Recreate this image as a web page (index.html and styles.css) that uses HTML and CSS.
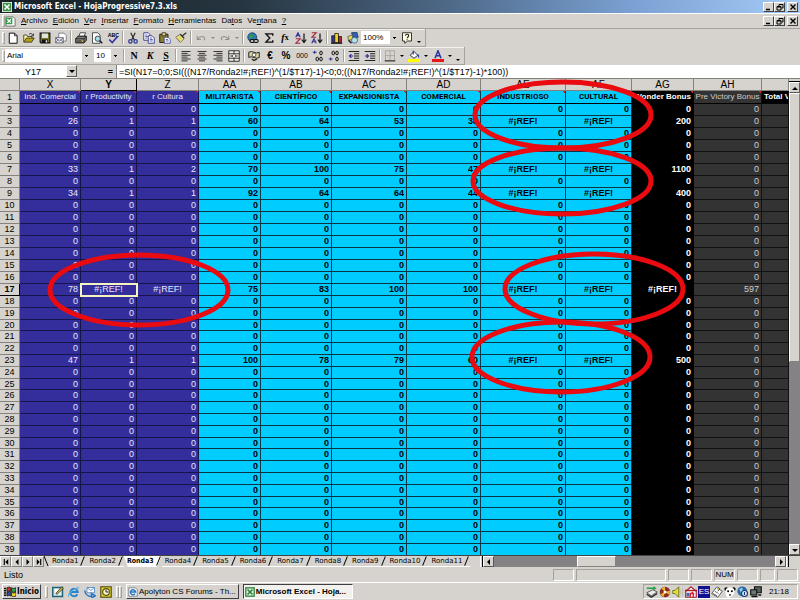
FILE: index.html
```html
<!DOCTYPE html>
<html lang="es">
<head>
<meta charset="utf-8">
<title>Microsoft Excel - HojaProgressive7.3.xls</title>
<link rel="stylesheet" href="styles.css">
</head>
<body>
<header class="titlebar">
  <svg class="app-icon" viewBox="0 0 12 12"><rect width="12" height="12" fill="#e9f3e6"/><rect x="1" y="1" width="10" height="10" fill="#3b9145"/><path d="M3 3l6 6M9 3l-6 6" stroke="#fff" stroke-width="2"/></svg>
  <h1>Microsoft Excel - HojaProgressive7.3.xls</h1>
  <div class="winbuttons">
    <button aria-label="Minimizar"><svg viewBox="0 0 8 8"><path d="M1 6.5h4" stroke="#000" stroke-width="1.5"/></svg></button>
    <button aria-label="Restaurar"><svg viewBox="0 0 8 8"><path d="M3 3V1.5h4V5H5.500M1 3.500h4V7H1zM1 4h4M3 1.500h4" fill="none" stroke="#000"/></svg></button>
    <button class="close" aria-label="Cerrar"><svg viewBox="0 0 8 8"><path d="M1.500 1.500l5 5M6.500 1.500l-5 5" stroke="#000" stroke-width="1.400"/></svg></button>
  </div>
</header>
<nav class="menubar">
  <span class="grip"></span>
  <svg class="doc-icon" viewBox="0 0 12 12"><path d="M1 1h8l2 2v8H1z" fill="#fff" stroke="#666"/><rect x="1" y="2" width="7" height="7" fill="#2f9a46"/><path d="M2.500 3.500l4 4M6.500 3.500l-4 4" stroke="#fff" stroke-width="1.500"/></svg>
  <button><u>A</u>rchivo</button><button><u>E</u>dición</button><button><u>V</u>er</button><button><u>I</u>nsertar</button><button><u>F</u>ormato</button><button><u>H</u>erramientas</button><button>Da<u>t</u>os</button><button>Ve<u>n</u>tana</button><button><u>?</u></button>
  <div class="winbuttons">
    <button aria-label="Minimizar libro"><svg viewBox="0 0 8 8"><path d="M1 6.500h4" stroke="#000" stroke-width="1.500"/></svg></button>
    <button aria-label="Restaurar libro"><svg viewBox="0 0 8 8"><path d="M3 3V1.500h4V5H5.500M1 3.500h4V7H1zM1 4h4M3 1.500h4" fill="none" stroke="#000"/></svg></button>
    <button class="close" aria-label="Cerrar libro"><svg viewBox="0 0 8 8"><path d="M1.500 1.500l5 5M6.500 1.500l-5 5" stroke="#000" stroke-width="1.400"/></svg></button>
  </div>
</nav>

<div class="toolbar">
  <span class="grip"></span>
  <button class="tool" aria-label="Nuevo"><svg viewBox="0 0 16 16"><path d="M3 1.500h7l3.500 3.500v10H3z" fill="#fff" stroke="#111" stroke-width="1.300"/><path d="M10 1.500V5h3.500" fill="none" stroke="#111"/></svg></button>
  <button class="tool" aria-label="Abrir"><svg viewBox="0 0 16 16"><path d="M1 13V4h4l1 2h6v2" fill="#fff5a0" stroke="#222"/><path d="M1 13.500L4.500 8H15l-3.500 5.500z" fill="#b9a114" stroke="#222"/><path d="M8 3q3-3 5 1M14 2v3h-3" fill="none" stroke="#111"/></svg></button>
  <button class="tool" aria-label="Guardar"><svg viewBox="0 0 16 16"><path d="M1.500 1.500h13v13h-12l-1-1z" fill="#77762a" stroke="#111" stroke-width="1.500"/><rect x="4" y="2" width="8" height="6" fill="#e2e2da"/><rect x="4" y="10" width="8" height="4.500" fill="#111"/><rect x="9" y="11" width="2" height="3" fill="#eee"/></svg></button>
  <button class="tool" aria-label="Correo"><svg viewBox="0 0 16 16"><path d="M5 1.500h7l3 3V12H5z" fill="#fff" stroke="#667"/><path d="M1 7.500h10v7H1z" fill="#f4f4fa" stroke="#445"/><path d="M1 8l5 4 5-4M1 14l4-4M11 14l-4-4" fill="none" stroke="#445"/></svg></button>
  <span class="sep"></span>
  <button class="tool" aria-label="Imprimir"><svg viewBox="0 0 16 16"><path d="M5 6l2-5h7l-2 5z" fill="#fff" stroke="#222"/><path d="M1 9l3-3.500h11V11l-3 3.500H1z" fill="#85837d" stroke="#111" stroke-width="1.300"/><path d="M1 9h11l3-3M12 9v5M3 12h6" fill="none" stroke="#111"/><path d="M9 12h2" stroke="#e4c912" stroke-width="1.500"/></svg></button>
  <button class="tool" aria-label="Vista preliminar"><svg viewBox="0 0 16 16"><path d="M2 1h7l3 3v11H2z" fill="#fff" stroke="#222"/><circle cx="9" cy="9" r="3.500" fill="#a8dce8" stroke="#222"/><path d="M11.500 11.500l3.500 3.500" stroke="#222" stroke-width="2"/></svg></button>
  <button class="tool" aria-label="Ortografía"><svg viewBox="0 0 16 16"><text x="1" y="6" font-size="7" font-weight="bold" font-family="Liberation Sans, sans-serif">ABC</text><path d="M3 10l4 4 7-8" fill="none" stroke="#3535a5" stroke-width="2.300"/></svg></button>
  <span class="sep"></span>
  <button class="tool" aria-label="Cortar"><svg viewBox="0 0 16 16"><path d="M5 1l5 10M11 1L6 11" stroke="#222" stroke-width="1.500"/><g fill="none" stroke="#2d3993" stroke-width="1.700"><circle cx="4.500" cy="12.500" r="2.200"/><circle cx="11.500" cy="12.500" r="2.200"/></g></svg></button>
  <button class="tool" aria-label="Copiar"><svg viewBox="0 0 16 16"><g fill="#fff" stroke="#32398e" stroke-width="1.200"><path d="M1 1h6l2 2v8H1z"/><path d="M7 5h5l3 3v7H7z"/></g><path d="M3 4h3M3 6h4M3 8h3M9 8h3M9 10h4M9 12h4" stroke="#32398e"/></svg></button>
  <button class="tool" aria-label="Pegar"><svg viewBox="0 0 16 16"><path d="M1 3h11v11H1z" fill="#8a802a" stroke="#222" stroke-width="1.300"/><path d="M4 1h5v4H4z" fill="#ddd17c" stroke="#222"/><path d="M7 7h5l3 3v5H7z" fill="#fff" stroke="#32398e"/><path d="M9 10h3M9 12h4" stroke="#32398e"/></svg></button>
  <button class="tool" aria-label="Copiar formato"><svg viewBox="0 0 16 16"><path d="M1 7l6-4 5 6-5 5z" fill="#f3e982" stroke="#555"/><path d="M7 3l5 5M10 5l5-4" stroke="#333" stroke-width="1.800"/><path d="M3 8l4 4M5 6l4 4" stroke="#b4a530"/></svg></button>
  <span class="sep"></span>
  <button class="tool" aria-label="Deshacer"><svg viewBox="0 0 16 16"><path d="M3 5v5h5M3 10q5-6 9-3 2 2 0 4" fill="none" stroke="#929089" stroke-width="1.400"/></svg></button><button class="drop dim" aria-label="Lista deshacer"></button>
  <button class="tool" aria-label="Rehacer"><svg viewBox="0 0 16 16"><path d="M13 5v5H8M13 10Q8 4 4 7q-2 2 0 4" fill="none" stroke="#929089" stroke-width="1.400"/></svg></button><button class="drop dim" aria-label="Lista rehacer"></button>
  <span class="sep"></span>
  <button class="tool" aria-label="Hipervínculo"><svg viewBox="0 0 16 16"><circle cx="7" cy="7" r="6" fill="#287dab" stroke="#16346a"/><path d="M4 3l4 1-1 4-4 1z" fill="#319c55"/><rect x="4" y="10" width="6" height="4" rx="2" fill="#bbb" stroke="#111" stroke-width="1.500"/><rect x="9" y="10" width="6" height="4" rx="2" fill="#bbb" stroke="#111" stroke-width="1.500"/></svg></button>
  <button class="tool" aria-label="Autosuma"><svg viewBox="0 0 16 16"><path d="M13 5V2.500H4L9 8l-5 5.500h9V11" fill="none" stroke="#111" stroke-width="1.900"/></svg></button>
  <button class="tool fx" aria-label="Función"><i>f</i><small>x</small></button>
  <button class="tool" aria-label="Orden ascendente"><svg viewBox="0 0 16 16"><path d="M1 7l3-6 3 6M2 5h4" fill="none" stroke="#31319b" stroke-width="1.500"/><path d="M1 9h6l-6 6h6" fill="none" stroke="#a5263d" stroke-width="1.500"/><path d="M12 2v11M9 10l3 4 3-4" fill="none" stroke="#111" stroke-width="1.600"/></svg></button>
  <button class="tool" aria-label="Orden descendente"><svg viewBox="0 0 16 16"><path d="M1 15l3-6 3 6M2 13h4" fill="none" stroke="#31319b" stroke-width="1.500"/><path d="M1 1h6L1 7h6" fill="none" stroke="#a5263d" stroke-width="1.500"/><path d="M12 2v11M9 10l3 4 3-4" fill="none" stroke="#111" stroke-width="1.600"/></svg></button>
  <span class="sep"></span>
  <button class="tool" aria-label="Gráfico"><svg viewBox="0 0 16 16"><g stroke="#111"><path d="M1 5h4v9H1z" fill="#2e369f"/><path d="M5 2h5v12H5z" fill="#e8d422"/><path d="M10 6h4v8h-4z" fill="#b92233"/></g><path d="M0 15h15" stroke="#111" stroke-width="1.500"/></svg></button>
  <button class="tool" aria-label="Dibujo"><svg viewBox="0 0 16 16"><path d="M6 1l7-1 2 7-6 3z" fill="#2f62b5" stroke="#234"/><path d="M1 6l6-2 1 6-6 1z" fill="#e5d748" stroke="#555"/><circle cx="10" cy="11" r="4" fill="#b9e0dd" stroke="#26508e"/><path d="M2 11l4 4" stroke="#222" stroke-width="2"/></svg></button>
  <select class="combo zoom" aria-label="Zoom"><option>100%</option></select>
  <button class="tool help" aria-label="Ayuda"><svg viewBox="0 0 16 16"><path d="M2 1h12v11H9l-4 3v-3H2z" fill="#ffffe0" stroke="#222" stroke-width="1.200"/><path d="M6 5q0-2 2-2 3 0 2 3L8 8M8 9.500v1.500" fill="none" stroke="#222" stroke-width="1.500"/></svg></button>
  <button class="drop low" aria-label="Más botones"></button>
</div>

<div class="toolbar format">
  <span class="grip"></span>
  <select class="combo font" aria-label="Fuente"><option>Arial</option></select>
  <select class="combo size" aria-label="Tamaño"><option>10</option></select>
  <span class="sep"></span>
  <button class="tool letter"><b>N</b></button>
  <button class="tool letter"><b><i>K</i></b></button>
  <button class="tool letter"><b><u>S</u></b></button>
  <span class="sep"></span>
  <button class="tool" aria-label="Alinear a la izquierda"><svg viewBox="0 0 16 16"><path d="M2 2h12M2 4.500h8M2 7h12M2 9.500h8M2 12h12M2 14.500h8" stroke="#333" stroke-width="1.300"/></svg></button>
  <button class="tool" aria-label="Centrar"><svg viewBox="0 0 16 16"><path d="M2 2h12M4 4.500h8M2 7h12M4 9.500h8M2 12h12M4 14.500h8" stroke="#333" stroke-width="1.300"/></svg></button>
  <button class="tool" aria-label="Alinear a la derecha"><svg viewBox="0 0 16 16"><path d="M2 2h12M6 4.500h8M2 7h12M6 9.500h8M2 12h12M6 14.500h8" stroke="#333" stroke-width="1.300"/></svg></button>
  <button class="tool" aria-label="Combinar y centrar"><svg viewBox="0 0 16 16"><path d="M1 1h14v14H1zM1 5h14M1 11h14M8 1v4M8 11v4M3 8h3M13 8h-3" fill="#f3f1ed" stroke="#222" stroke-width="1.200"/><path d="M7 6l-2 2 2 2M9 6l2 2-2 2" fill="none" stroke="#222"/></svg></button>
  <span class="sep"></span>
  <button class="tool" aria-label="Moneda"><svg viewBox="0 0 16 16"><path d="M1 3q4-2 7 0t7 0v7q-3 2-7 0t-7 0z" fill="#d9d39b" stroke="#222" stroke-width="1.300"/><circle cx="8" cy="6.500" r="2.500" fill="#fff" stroke="#333"/><path d="M5 12l3 2 4-2" fill="#c5b53a" stroke="#222" stroke-width="1.500"/></svg></button>
  <button class="tool letter sans"><b>€</b></button>
  <button class="tool letter sans"><b>%</b></button>
  <button class="tool zeros">000</button>
  <button class="tool" aria-label="Aumentar decimales"><svg viewBox="0 0 16 16"><path d="M1 3h5M3.500 1v4" stroke="#31319b" stroke-width="1.500"/><g fill="none" stroke="#111" stroke-width="1.300"><ellipse cx="12" cy="4" rx="1.700" ry="2.500"/><ellipse cx="7" cy="12" rx="1.700" ry="2.500"/><ellipse cx="12" cy="12" rx="1.700" ry="2.500"/></g></svg></button>
  <button class="tool" aria-label="Disminuir decimales"><svg viewBox="0 0 16 16"><path d="M1 12h5M3.500 10v4" stroke="#31319b" stroke-width="1.500"/><g fill="none" stroke="#111" stroke-width="1.300"><ellipse cx="7" cy="4" rx="1.700" ry="2.500"/><ellipse cx="12" cy="4" rx="1.700" ry="2.500"/><ellipse cx="12" cy="12" rx="1.700" ry="2.500"/></g></svg></button>
  <span class="sep"></span>
  <button class="tool" aria-label="Disminuir sangría"><svg viewBox="0 0 16 16"><path d="M1 2h14M8 5h7M8 8h7M8 11h7M1 14h14" stroke="#222" stroke-width="1.400"/><path d="M7 8H2M4.500 5.500L2 8l2.500 2.500" fill="none" stroke="#31319b" stroke-width="1.600"/></svg></button>
  <button class="tool" aria-label="Aumentar sangría"><svg viewBox="0 0 16 16"><path d="M1 2h14M8 5h7M8 8h7M8 11h7M1 14h14" stroke="#222" stroke-width="1.400"/><path d="M1 8h5M3.500 5.500L6 8l-2.500 2.500" fill="none" stroke="#31319b" stroke-width="1.600"/></svg></button>
  <span class="sep"></span>
  <button class="tool" aria-label="Bordes"><svg viewBox="0 0 16 16"><path d="M2 1v13M8 1v13M14 1v13M2 1h12M2 7.500h12" stroke="#9d9a93"/><path d="M1 14.500h14" stroke="#222" stroke-width="1.500"/></svg></button><button class="drop" aria-label="Tipos de borde"></button>
  <button class="tool" aria-label="Color de relleno"><svg viewBox="0 0 16 16"><path d="M3 7l5-5 5 5-5 4z" fill="#fff" stroke="#222" stroke-width="1.200"/><path d="M7 6V1M13 6q2 2 1 4" fill="none" stroke="#27389b" stroke-width="1.600"/><path d="M0 14h16" stroke="#ff0" stroke-width="4"/></svg></button><button class="drop" aria-label="Colores de relleno"></button>
  <button class="tool" aria-label="Color de fuente"><svg viewBox="0 0 16 16"><path d="M4 11l4-10 4 10M5.500 7.500h5" fill="none" stroke="#29319c" stroke-width="2"/><path d="M0 14h16" stroke="#e8151b" stroke-width="4"/></svg></button><button class="drop" aria-label="Colores de fuente"></button>
  <button class="drop low" aria-label="Más formato"></button>
</div>

<div class="formulabar">
  <input class="namebox" aria-label="Cuadro de nombres" value="Y17">
  <button class="sbtn" aria-label="Abrir nombres"><svg viewBox="0 0 8 8"><path d="M1 3h6L4 6z"/></svg></button>
  <button class="equals">=</button>
  <input class="formula" aria-label="Fórmula" value="=SI(N17=0;0;SI(((N17/Ronda2!#¡REF!)^(1/$T17)-1)&lt;0;0;((N17/Ronda2!#¡REF!)^(1/$T17)-1)*100))">
</div>

<main class="workbook">
  <div class="sheet">
    <table>
      <colgroup><col class="c-row"><col class="c-x"><col class="c-y"><col class="c-z"><col class="c-aa"><col class="c-ab"><col class="c-ac"><col class="c-ad"><col class="c-ae"><col class="c-af"><col class="c-ag"><col class="c-ah"><col></colgroup>
      <thead><tr><th></th><th>X</th><th class="on">Y</th><th>Z</th><th>AA</th><th>AB</th><th>AC</th><th>AD</th><th>AE</th><th>AF</th><th>AG</th><th>AH</th><th></th></tr></thead>
      <tbody id="cells"></tbody>
    </table>
    <svg class="marks" viewBox="0 0 788 476" aria-hidden="true">
      <ellipse cx="563" cy="36" rx="88" ry="33"/>
      <ellipse cx="562" cy="102" rx="89" ry="33"/>
      <ellipse cx="594" cy="210" rx="89" ry="35"/>
      <ellipse cx="561" cy="278" rx="89" ry="35"/>
      <ellipse cx="139" cy="211" rx="89" ry="35"/>
    </svg>
  </div>
  <div class="vscroll">
    <span class="split"></span>
    <button class="sbtn" aria-label="Arriba"><svg viewBox="0 0 8 8"><path d="M1 6h6L4 3z"/></svg></button>
    <span class="vthumb"></span><span class="track"></span>
    <button class="sbtn" aria-label="Abajo"><svg viewBox="0 0 8 8"><path d="M1 3h6L4 6z"/></svg></button>
  </div>
</main>

<div class="tabrow">
  <div class="tabs">
    <button class="nav" aria-label="Primera"><svg viewBox="0 0 8 8"><path d="M1 0h1.500v8H1zM7 0v8L3 4z"/></svg></button>
    <button class="nav" aria-label="Anterior"><svg viewBox="0 0 8 8"><path d="M6 0v8L2 4z"/></svg></button>
    <button class="nav" aria-label="Siguiente"><svg viewBox="0 0 8 8"><path d="M2 0v8l4-4z"/></svg></button>
    <button class="nav" aria-label="Última"><svg viewBox="0 0 8 8"><path d="M5.500 0H7v8H5.500zM1 0v8l4-4z"/></svg></button>
    <svg class="edge" viewBox="0 0 5 11"><path d="M0 0l4 10" stroke="#000"/></svg>
    <button class="tab">Ronda1</button><button class="tab">Ronda2</button><button class="tab current">Ronda3</button><button class="tab">Ronda4</button><button class="tab">Ronda5</button><button class="tab">Ronda6</button><button class="tab">Ronda7</button><button class="tab">Ronda8</button><button class="tab">Ronda9</button><button class="tab">Ronda10</button><button class="tab">Ronda11</button>
  </div>
  <div class="hscroll">
    <span class="hsplit"></span>
    <button class="sbtn" aria-label="Izquierda"><svg viewBox="0 0 8 8"><path d="M5 1v6L2 4z"/></svg></button>
    <span class="track lead"></span><span class="hthumb"></span><span class="track"></span>
    <button class="sbtn" aria-label="Derecha"><svg viewBox="0 0 8 8"><path d="M3 1v6l3-3z"/></svg></button>
    <span class="hsplit"></span>
  </div>
</div>

<div class="status">
  <span class="ready">Listo</span>
  <span class="cell w-s"></span><span class="cell w-l"></span><span class="cell w-s"></span><span class="cell w-s"></span><span class="cell w-s">NUM</span><span class="cell w-s"></span><span class="cell w-t"></span><span class="cell w-s"></span>
</div>

<footer class="taskbar">
  <button class="start"><svg viewBox="0 0 16 14"><path d="M0 3h3M0 6h3M0 9h3M0 12h3" stroke="#111" stroke-width="2"/><g stroke="#111"><path d="M4 2q3-2 5 0v5q-2-2-5 0z" fill="#e12b23"/><path d="M10 2q3 2 6 0v5q-3 2-6 0z" fill="#2ca448"/><path d="M4 8q3-2 5 0v5q-2-2-5 0z" fill="#2f4cb8"/><path d="M10 8q3 2 6 0v5q-3 2-6 0z" fill="#ecd426"/></g></svg>Inicio</button>
  <span class="grip"></span>
  <button class="quick" aria-label="Escritorio"><svg viewBox="0 0 16 16"><path d="M1 2h13v12H1z" fill="#d3e6e9" stroke="#236477" stroke-width="2"/><path d="M4 4h7v7H4z" fill="#fff"/><path d="M5 10l8-9 2 2-8 8z" fill="#e0b832" stroke="#222"/></svg></button>
  <button class="quick" aria-label="Internet Explorer"><svg viewBox="0 0 16 16"><path d="M12.500 11A5 5 0 1 1 13 8H4" fill="none" stroke="#2a84cc" stroke-width="2.600"/><path d="M1 14Q-1 9 13 2l2 1" fill="none" stroke="#5db0dc" stroke-width="1.400"/></svg></button>
  <button class="quick" aria-label="Outlook Express"><svg viewBox="0 0 16 16"><path d="M4 2h10v7H4z" fill="#f6fbff" stroke="#3e7ec1"/><path d="M4 2l5 4 5-4" fill="none" stroke="#3e7ec1"/><path d="M1 6q1 8 9 8V10l5 3-5 3" fill="none" stroke="#2875c5" stroke-width="2"/></svg></button>
  <button class="quick" aria-label="Outlook"><svg viewBox="0 0 16 16"><rect x="1" y="1" width="14" height="14" fill="#d9c928" stroke="#575018" stroke-width="1.500"/><circle cx="8" cy="8" r="4.500" fill="#f5f2cf" stroke="#575018" stroke-width="1.500"/><path d="M8 5v3h3" fill="none" stroke="#222" stroke-width="1.300"/></svg></button>
  <span class="grip"></span><span class="grip second"></span>
  <button class="task"><svg viewBox="0 0 12 12"><path d="M1 1h8l2 2v8H1z" fill="#fff" stroke="#777"/><path d="M8.500 8A3 3 0 1 1 9 6H4" fill="none" stroke="#2274c4" stroke-width="1.700"/></svg>Apolyton CS Forums - Th...</button>
  <button class="task active"><svg viewBox="0 0 12 12"><rect x="1" y="1" width="10" height="10" fill="#e6f3e3" stroke="#227c35" stroke-width="1.500"/><path d="M3 3l6 6M9 3l-6 6" stroke="#258539" stroke-width="2"/></svg>Microsoft Excel - Hoja...</button>
  <div class="tray">
    <svg viewBox="0 0 16 16"><path d="M1 9l8-4 6 3-8 5z" fill="#e9eeea" stroke="#333"/><path d="M1 11l6 4 8-5" fill="none" stroke="#222" stroke-width="1.500"/><path d="M1 2h9V0l4 3-4 3V4H1z" fill="#23a148"/></svg>
    <svg viewBox="0 0 16 16"><circle cx="8" cy="8" r="7" fill="#8c2d20"/><path d="M8 8L3 3l5-2zM8 8l7-2-1 6zM8 8l-2 7-4-4z" fill="#e9b62e"/><circle cx="8" cy="8" r="2" fill="#fff"/></svg>
    <svg viewBox="0 0 16 16"><path d="M1 6h3l5-5v14l-5-5H1z" fill="#e7df32" stroke="#555a16"/><path d="M11 5v6M14 3v10" stroke="#bbb6a0"/></svg>
    <svg viewBox="0 0 16 16"><path d="M1 7l7-6 7 6v8H1z" fill="#fff" stroke="#a81c2b" stroke-width="1.500"/><path d="M0 6h16" stroke="#a81c2b" stroke-width="2"/><path d="M7 15v-5h4l-2-2M11 10v5" stroke="#dc2537" stroke-width="2" fill="none"/><path d="M2 9h4v5H2z" fill="#436cb3"/></svg>
    <span class="lang">ES</span>
    <svg viewBox="0 0 16 16"><path d="M1 10l6-8 8 5-6 8z" fill="#fff" stroke="#333"/><path d="M3 10l5 3M5 7l5 3" stroke="#444"/><path d="M9 1l3 3-3 3" fill="#c7be71" stroke="#333"/></svg>
    <svg viewBox="0 0 16 16"><circle cx="3" cy="4" r="2.500"/><circle cx="13" cy="4" r="2.500"/><path d="M2 7q0-5 6-5t6 5-6 8-6-8" fill="#fff"/><circle cx="5.500" cy="7" r="1.300"/><circle cx="10.500" cy="7" r="1.300"/><path d="M7 11h2v2H7z"/></svg>
    <svg viewBox="0 0 16 16"><circle cx="7" cy="7" r="6.500" fill="#2668a9"/><path d="M3 4l4-2 1 4-3 3z" fill="#93cce9"/><circle cx="10" cy="10" r="4" fill="#dcecf6" stroke="#173b73" stroke-width="1.500"/><path d="M10 8v4" stroke="#173b73" stroke-width="1.500"/></svg>
    <svg viewBox="0 0 16 16"><path d="M6 1h9v8H6z" fill="#56605f" stroke="#111" stroke-width="1.500"/><path d="M1 5h8v7H1z" fill="#6c7775" stroke="#111" stroke-width="1.500"/><path d="M2 14h8M11 12h4" stroke="#111" stroke-width="2"/></svg>
    <time>21:18</time>
  </div>
</footer>
<script src="sheet.js"></script>
</body>
</html>
```
FILE: styles.css
```css
* { box-sizing: border-box; }

:root {
  --face: #d6d3ce;
  --shade: #84827d;
  --ui: "Liberation Sans", Arial, sans-serif;
  --wide: "DejaVu Sans Condensed", "DejaVu Sans", sans-serif;
}

body {
  margin: 0;
  height: 100vh;
  display: flex;
  flex-direction: column;
  overflow: hidden;
  background: var(--face);
  font: 8px/10px var(--ui);
  color: #000;
}

button, input, select {
  font: inherit;
  color: inherit;
  margin: 0;
  padding: 0;
  border: 0;
  border-radius: 0;
  background: none;
}

button { display: flex; align-items: center; justify-content: center; white-space: nowrap; }
svg { display: block; flex: none; }

/* Title and menu */
.titlebar {
  flex: none;
  height: 13px;
  display: flex;
  align-items: center;
  gap: 2px;
  padding: 0 2px;
  background: linear-gradient(90deg, #172126, #263540 30%, #4c6684 55%, #789fd0 78%, #a5cbf7);
  color: #fff;
}
.app-icon { width: 10px; height: 10px; }
.titlebar h1 { margin: 0; font: bold 8px/12px var(--wide); }

.winbuttons { margin-left: auto; display: flex; }
.winbuttons button {
  width: 11px;
  height: 10px;
  background: var(--face);
  border: 1px solid;
  border-color: #fff #404040 #404040 #fff;
}
.winbuttons .close { margin-left: 2px; }
.winbuttons svg { width: 8px; height: 8px; }

.menubar {
  flex: none;
  height: 16px;
  display: flex;
  align-items: center;
  gap: 5px;
  padding: 0 2px;
  border-top: 1px solid #fff;
  border-bottom: 1px solid #a5a29c;
}
.menubar > .grip { margin-right: -5px; }
.doc-icon { width: 11px; height: 11px; }

.grip {
  flex: none;
  width: 3px;
  height: 12px;
  border: 1px solid;
  border-color: #fff #a5a29c #a5a29c #fff;
}

/* Toolbars */
.toolbar {
  flex: none;
  align-self: flex-start;
  height: 18px;
  display: flex;
  align-items: center;
  padding: 0 2px;
  border: solid #a5a29c;
  border-width: 0 1px 1px 0;
  box-shadow: inset 0 1px #f4f2ee;
}
.tool { width: 16px; height: 16px; }
.tool svg { width: 12px; height: 12px; }
.sep { flex: none; width: 2px; height: 13px; margin: 0 1px; border-left: 1px solid #a5a29c; border-right: 1px solid #fff; }
.drop { width: 8px; height: 16px; }
.drop::after { content: ""; border: 2px solid transparent; border-top-color: #000; border-bottom: 0; }
.drop.dim::after { border-top-color: #8d8a84; }
.drop.low { align-items: flex-end; padding-bottom: 3px; }
.fx { font: bold 10px/12px "Liberation Serif", serif; }
.fx small { font-size: 8px; }
.letter { font: 10px/12px "Liberation Serif", serif; }
.letter.sans { font-family: var(--ui); }
.zeros { font: 7px/10px var(--ui); }

.combo {
  appearance: none;
  height: 13px;
  padding: 0 10px 0 2px;
  background:
    linear-gradient(#000, #000) right 3px top 6px / 3px 1px no-repeat,
    linear-gradient(#000, #000) right 4px top 7px / 1px 1px no-repeat,
    linear-gradient(90deg, #fff calc(100% - 9px), var(--face) 0);
}
.combo.font { width: 86px; margin-right: 3px; }
.combo.size { width: 26px; margin-right: 2px; }
.combo.zoom { width: 38px; }

/* Formula bar */
.formulabar {
  flex: none;
  height: 13px;
  display: flex;
  background: #fff;
  font-size: 9px;
  line-height: 12px;
}
.formulabar .sbtn { height: 12px; }
.namebox { width: 66px; text-align: center; }
.equals {
  width: 40px;
  justify-content: flex-end;
  padding-right: 3px;
  background: var(--face);
  border-right: 1px solid var(--shade);
  font-weight: bold;
}
.formula { flex: 1; min-width: 0; padding-left: 2px; }

.sbtn {
  flex: none;
  width: 11px;
  height: 11px;
  background: var(--face);
  border: 1px solid;
  border-color: #fff #5a5854 #5a5854 #fff;
}
.sbtn svg { width: 8px; height: 8px; }

/* Grid */
.workbook { flex: 1; min-height: 0; display: flex; border-top: 1px solid var(--shade); }
.sheet { position: relative; flex: 1; min-width: 0; overflow: hidden; background: var(--face); }
.marks { position: absolute; top: 0; left: 0; width: 788px; height: 476px; }
.marks ellipse { fill: none; stroke: #e90b10; stroke-width: 5; }

table { width: 100%; table-layout: fixed; border-collapse: separate; border-spacing: 0; }
.c-row { width: 20px; }
.c-x { width: 61px; }
.c-y { width: 56px; }
.c-z, .c-aa, .c-ag { width: 62px; }
.c-ab { width: 71px; }
.c-ac { width: 75px; }
.c-ad { width: 74px; }
.c-ae { width: 85px; }
.c-af { width: 66px; }
.c-ah { width: 68px; }

th, td { padding: 0; height: 12px; line-height: 11px; overflow: hidden; white-space: nowrap; }
tbody tr:nth-child(5n + 20) td, tbody tr:nth-child(5n + 20) th { height: 11px; line-height: 10px; }
th {
  background: var(--face);
  border: solid var(--shade);
  border-width: 0 1px 1px 0;
  font-weight: normal;
  font-size: 9px;
  text-align: center;
}
thead th { font-size: 10px; }
th.on { font-weight: bold; border-color: #000; }
td {
  padding-right: 2px;
  border: solid #0b3542;
  border-width: 0 1px 1px 0;
  font-size: 9px;
  text-align: right;
}
td.violet { background: #332e9b; color: #e8e6fa; border-color: #16144a; }
td.cyan { background: #00ccff; font-weight: bold; }
td.black { background: #000; color: #fff; font-weight: bold; border-color: #000; }
td.grey { background: #333; color: #ccc; border-color: #111; }
td.error { text-align: center; padding: 0; }
td.selected { outline: 2px solid #f5f3c0; outline-offset: -1px; }

tbody .titles th, tbody .titles td { height: 13px; line-height: 12px; }
.titles td {
  padding: 0;
  font-size: 8px;
  text-align: center;
  border-bottom-color: #000;
  background-image: linear-gradient(225deg, #d8202c 2px, transparent 0);
}
.titles td.cyan { font-family: Roboto, sans-serif; }
.titles td.total { color: #fff; font-weight: bold; text-align: left; padding-left: 2px; background: #000; }

/* Scroll bars */
.vscroll { flex: none; width: 11px; display: flex; flex-direction: column; background: var(--face); }
.split { height: 3px; border-bottom: 1px solid #000; }
.vthumb { flex: 266; border: 1px solid; border-color: #fff var(--shade) var(--shade) #fff; }
.track { flex: 181; background: #848284; }

.tabrow { flex: none; height: 12px; display: flex; border-top: 1px solid #444; }
.tabs { flex: 3; display: flex; min-width: 0; overflow: hidden; font: 7px/10px "DejaVu Sans", sans-serif; }
.nav { width: 11px; flex: none; border: 1px solid; border-color: #fff var(--shade) var(--shade) #fff; }
.nav svg { width: 6px; height: 6px; }
.edge { width: 5px; height: 11px; }
.tab { position: relative; flex: none; padding: 0 8px 0 3px; border-bottom: 1px solid #fff; }
.tab::after {
  content: "";
  position: absolute;
  right: 3px;
  top: 0;
  width: 1px;
  height: 10px;
  background: #000;
  transform: rotate(22deg);
}
.tab.current { background: #fff; font-weight: bold; font-family: var(--wide); clip-path: polygon(0 0, 100% 0, calc(100% - 5px) 100%, 4px 100%); }

.hscroll { flex: 2; min-width: 0; display: flex; }
.hsplit { width: 3px; border-right: 1px solid #000; border-left: 1px solid #fff; }
.hscroll .track { flex: 154; }
.hscroll .lead { flex: 81; }
.hthumb { flex: 36; border: 1px solid; border-color: #fff var(--shade) var(--shade) #fff; }
.hscroll .hsplit:last-child { margin-right: 11px; }

/* Status and task bars */
.status { flex: none; height: 15px; display: flex; align-items: center; gap: 2px; padding: 1px 2px 1px 4px; }
.ready { flex: 1; font-size: 9px; }
.cell { height: 12px; border: 1px solid; border-color: #a5a29c #fff #fff #a5a29c; text-align: center; font-size: 8px; }
.w-s { width: 21px; }
.w-t { width: 15px; }
.w-l { width: 90px; }

.taskbar {
  flex: none;
  height: 18px;
  display: flex;
  align-items: center;
  gap: 4px;
  padding: 1px 2px;
  border-top: 1px solid #fff;
}
.start, .task {
  height: 15px;
  border: 1px solid;
  border-color: #fff #404040 #404040 #fff;
}
.start { width: 39px; gap: 1px; font: bold 8px/10px var(--wide); }
.start svg { width: 12px; height: 11px; }
.quick { width: 12px; height: 14px; }
.quick svg { width: 12px; height: 12px; }
.grip.second { margin-left: -4px; }
.task { flex: none; min-width: 110px; justify-content: flex-start; gap: 1px; padding: 0 2px 0 1px; }
.task svg { width: 10px; height: 10px; }
.task.active { background: #f3f1ee; border-color: #404040 #fff #fff #404040; font-weight: bold; }
.tray {
  margin-left: auto;
  height: 15px;
  display: flex;
  align-items: center;
  gap: 1px;
  padding: 0 8px 0 2px;
  border: 1px solid;
  border-color: #a5a29c #fff #fff #a5a29c;
}
.tray svg { width: 12px; height: 12px; }
.lang { width: 12px; height: 12px; background: #11118e; color: #fff; text-align: center; line-height: 12px; }
.tray time { padding-left: 6px; }
```
FILE: sheet.js
```js
const tones = ["violet", "violet", "violet", "cyan", "cyan", "cyan", "cyan", "cyan", "cyan", "black", "grey", "grey"];
const titles = ["Ind. Comercial", "r Productivity", "r Cultura", "MILITARISTA", "CIENTÍFICO", "EXPANSIONISTA",
  "COMERCIAL", "INDUSTRIOSO", "CULTURAL", "Wonder Bonus", "Pre Victory Bonus", "Total V"];
const E = "#¡REF!";
const values = {
  3: [26, 1, 1, 60, 64, 53, 38, E, E, 200, 0],
  7: [33, 1, 2, 70, 100, 75, 47, E, E, 1100, 0],
  9: [34, 1, 1, 92, 64, 64, 44, E, E, 400, 0],
  17: [78, E, E, 75, 83, 100, 100, E, E, E, 597],
  23: [47, 1, 1, 100, 78, 79, 60, E, E, 500, 0]
};
const blank = Array(11).fill(0);
const body = document.getElementById("cells");

function addRow(number, cells) {
  const tr = body.insertRow();
  const head = document.createElement("th");
  head.textContent = number;
  if (number === 17) head.className = "on";
  tr.append(head);
  tones.forEach((tone, i) => {
    const td = tr.insertCell();
    td.className = tone;
    td.textContent = cells[i] ?? "";
    if (cells[i] === E) td.classList.add("error");
    if (number === 17 && i === 1) td.classList.add("selected");
  });
  return tr;
}

const first = addRow(1, titles);
first.className = "titles";
first.lastChild.classList.add("total");
for (let n = 2; n <= 39; n++) addRow(n, values[n] || blank);
```
